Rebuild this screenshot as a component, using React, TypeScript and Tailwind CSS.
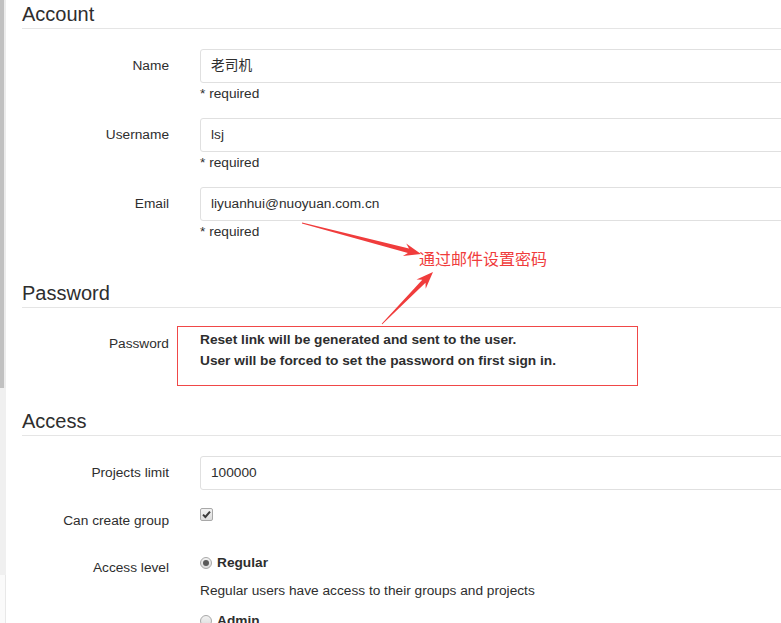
import React from "react";

const FONT = '"Liberation Sans", "Noto Sans CJK SC", Arial, sans-serif';

function arrowPoints(sx: number, sy: number, tx: number, ty: number) {
  const dx = tx - sx;
  const dy = ty - sy;
  const len = Math.sqrt(dx * dx + dy * dy);
  const ux = dx / len;
  const uy = dy / len;
  const nx = -uy;
  const ny = ux;
  const head = 17;
  const bx = tx - ux * head;
  const by = ty - uy * head;
  const nx2 = tx - ux * (head - 4);
  const ny2 = ty - uy * (head - 4);
  const pts: [number, number][] = [
    [sx + nx * 0.4, sy + ny * 0.4],
    [nx2 + nx * 2.2, ny2 + ny * 2.2],
    [bx + nx * 6.5, by + ny * 6.5],
    [tx, ty],
    [bx - nx * 6.5, by - ny * 6.5],
    [nx2 - nx * 2.2, ny2 - ny * 2.2],
    [sx - nx * 0.4, sy - ny * 0.4],
  ];
  return pts.map((p) => `${p[0].toFixed(1)},${p[1].toFixed(1)}`).join(" ");
}

function Heading({ children, mt }: { children: React.ReactNode; mt: string }) {
  return (
    <div className={`${mt} h-[29px] shrink-0 border-b border-[#e5e5e5] text-[20px] leading-[28px] text-[#2e2e2e]`}>
      {children}
    </div>
  );
}

function TextRow({ label, value, help }: { label: string; value: string; help?: boolean }) {
  return (
    <div className="flex mb-[14px]">
      <div className="w-[147px] h-[34px] flex items-center justify-end shrink-0">{label}</div>
      <div className="ml-[31px] flex-1">
        <div className="h-[34px] w-[640px] border border-[#e0e0e0] rounded-[3px] px-[10px] flex items-center bg-white">
          {value}
        </div>
        {help && <div className="mt-[1px] leading-[20px]">* required</div>}
      </div>
    </div>
  );
}

export default function App() {
  return (
    <div
      className="relative w-[781px] h-[623px] overflow-hidden bg-white flex text-[13.7px] text-[#2e2e2e]"
      style={{ fontFamily: FONT }}
    >
      <div className="w-[6px] shrink-0 flex flex-col">
        <div className="h-[388px] flex">
          <div className="w-[4px] bg-[#c1c1c1]" />
          <div className="flex-1 bg-[#ececec]" />
        </div>
        <div className="h-[187px] bg-[#f0f0f0]" />
        <div className="flex-1 bg-[#fafafa] border-r border-[#e8e8e8]" />
      </div>

      <div className="flex-1 pl-[16px] min-w-0 flex flex-col">
        <Heading mt="mt-0">Account</Heading>
        <div className="mt-[20px] flex flex-col">
          <TextRow label="Name" value="老司机" help />
          <TextRow label="Username" value="lsj" help />
          <TextRow label="Email" value="liyuanhui@nuoyuan.com.cn" help />
        </div>

        <Heading mt="mt-[23px]">Password</Heading>
        <div className="flex mt-[21px]">
          <div className="w-[147px] pt-[5px] leading-[20px] text-right shrink-0">Password</div>
          <div className="ml-[31px] flex-1 font-bold leading-[21px]">
            <div>Reset link will be generated and sent to the user.</div>
            <div>User will be forced to set the password on first sign in.</div>
          </div>
        </div>

        <Heading mt="mt-[36px]">Access</Heading>
        <div className="mt-[20px] flex flex-col">
          <div className="flex">
            <div className="w-[147px] h-[34px] flex items-center justify-end shrink-0">Projects limit</div>
            <div className="ml-[31px] flex-1">
              <div className="h-[34px] w-[640px] border border-[#e0e0e0] rounded-[3px] px-[10px] flex items-center">
                100000
              </div>
            </div>
          </div>

          <div className="flex mt-[14px] h-[34px]">
            <div className="w-[147px] pt-[7px] leading-[20px] text-right shrink-0">Can create group</div>
            <div className="ml-[31px] flex-1 pt-[4px]">
              <div className="w-[13px] h-[13px] rounded-[2px] border border-[#a8a8a8] bg-gradient-to-b from-[#f2f2f2] to-[#dcdcdc] flex items-center justify-center">
                <svg width="9" height="9" viewBox="0 0 9 9">
                  <path d="M1 4.6 L3.4 7 L8 1.6" fill="none" stroke="#3a3a3a" strokeWidth="2" />
                </svg>
              </div>
            </div>
          </div>

          <div className="flex mt-[13px]">
            <div className="w-[147px] pt-[7px] leading-[20px] text-right shrink-0">Access level</div>
            <div className="ml-[31px] flex-1">
              <div className="mt-[2px] flex items-center h-[20px]">
                <div className="w-[12px] h-[12px] rounded-full border border-[#a8a8a8] bg-gradient-to-b from-[#f2f2f2] to-[#dcdcdc] flex items-center justify-center">
                  <div className="w-[6px] h-[6px] rounded-full bg-[#5a5a5a]" />
                </div>
                <span className="ml-[5px] font-bold">Regular</span>
              </div>
              <div className="mt-[8px] leading-[20px]">Regular users have access to their groups and projects</div>
              <div className="mt-[10px] flex items-center h-[20px]">
                <div className="w-[12px] h-[12px] rounded-full border border-[#a8a8a8] bg-gradient-to-b from-[#f2f2f2] to-[#dcdcdc]" />
                <span className="ml-[5px] font-bold">Admin</span>
              </div>
            </div>
          </div>
        </div>
      </div>

      {/* annotations */}
      <div className="absolute left-[177px] top-[326px] w-[461px] h-[60px] border border-[#f04848]" />
      <svg className="absolute left-0 top-0 pointer-events-none" width="781" height="623">
        <polygon points={arrowPoints(302, 223, 421, 254)} fill="#f03c3c" />
        <polygon points={arrowPoints(382, 324, 433, 272)} fill="#f03c3c" />
      </svg>
      <div
        className="absolute left-[419px] top-[247px] text-[16px] leading-[22px] text-[#f03c3c]"
        style={{ fontFamily: '"Noto Sans CJK SC", sans-serif' }}
      >
        通过邮件设置密码
      </div>
    </div>
  );
}
